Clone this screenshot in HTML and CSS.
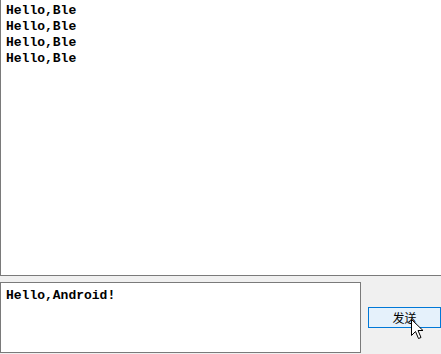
FILE: index.html
```html
<!DOCTYPE html>
<html>
<head>
<meta charset="utf-8">
<link rel="stylesheet" href="styles.css">
</head>
<body>
<div class="window">
  <div class="log">
    <div class="line">Hello,Ble</div>
    <div class="line">Hello,Ble</div>
    <div class="line">Hello,Ble</div>
    <div class="line">Hello,Ble</div>
  </div>
  <div class="bottom">
    <div class="input">Hello,Android!</div>
    <div class="btn-wrap">
      <div class="btn">发送</div>
      <svg class="cursor" width="13" height="21" viewBox="0 0 13 21">
        <path d="M0.5 0.5 L0.5 16.5 L4.5 12.5 L7.5 19.5 L10 18.5 L7 11.5 L12 11.5 Z" fill="#fff" stroke="#000" stroke-width="1" stroke-linejoin="miter"/>
      </svg>
    </div>
  </div>
</div>
</body>
</html>
```
FILE: styles.css
```css
html, body {
  margin: 0;
  padding: 0;
  background: #f0f0f0;
}
.window {
  width: 441px;
  height: 354px;
  display: flex;
  flex-direction: column;
  overflow: hidden;
}
.log {
  background: #fff;
  border-left: 1px solid #7a7a7a;
  border-bottom: 1px solid #7a7a7a;
  padding: 3px 0 0 5px;
  box-sizing: border-box;
  height: 276px;
  font-family: "Liberation Mono", "DejaVu Sans Mono", monospace;
  font-weight: bold;
  font-size: 13px;
  line-height: 16px;
  color: #000;
}
.bottom {
  display: flex;
  margin-top: 6px;
  gap: 7px;
}
.input {
  width: 361px;
  height: 71px;
  box-sizing: border-box;
  background: #fff;
  border: 1px solid #7a7a7a;
  padding: 5px 0 0 5px;
  font-family: "Liberation Mono", "DejaVu Sans Mono", monospace;
  font-weight: bold;
  font-size: 13px;
  line-height: 16px;
  color: #000;
}
.btn-wrap {
  position: relative;
  padding-top: 25px;
}
.btn {
  width: 73px;
  height: 21px;
  box-sizing: border-box;
  border: 1px solid #0078d7;
  background: #e5f1fb;
  font-family: "Noto Sans CJK SC", sans-serif;
  font-size: 12px;
  line-height: 19px;
  text-align: center;
  color: #000;
}
.cursor {
  position: absolute;
  left: 43px;
  top: 37px;
}
```
